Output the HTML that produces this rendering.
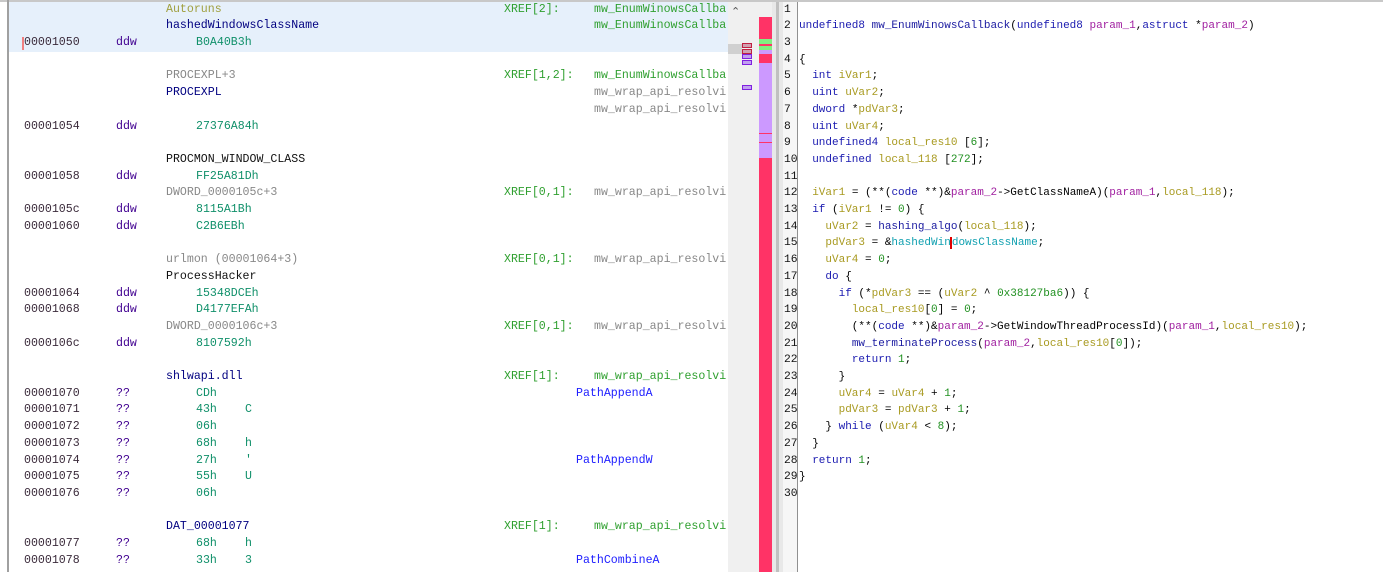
<!DOCTYPE html>
<html><head><meta charset="utf-8"><style>
body{margin:0;width:1383px;height:572px;overflow:hidden;background:#fff;position:relative;font-family:"Liberation Mono",monospace;}
.l{position:absolute;left:0;top:0;width:728px;height:572px;font-size:11.6px;}
.r{position:absolute;white-space:pre;line-height:16.7px;height:16.7px;}
.s{position:absolute;white-space:pre;}
.ad{color:#3a2a3a}.mn{color:#400090}.v{color:#10906a}.lb{color:#000080}.gr{color:#888}.ol{color:#a0a040}.xr{color:#30a030}.bl{color:#2020ff}.bk{color:#111}
.code{position:absolute;left:799px;top:1.6px;font-size:11px;line-height:16.7px;white-space:pre;color:#000;}
.ln{position:absolute;left:784px;top:1.6px;font-size:11.3px;line-height:16.7px;white-space:pre;color:#111;}
.t{color:#1a1ab0}.vr{color:#a89a20}.p{color:#a020a0}.n{color:#209020}.f{color:#1a1aa0}.g{color:#10a0b0}
</style></head><body>
<div style="position:absolute;left:0;top:0;width:1383px;height:2px;background:#c8c8c8"></div>
<div style="position:absolute;left:7px;top:0;width:2px;height:572px;background:#a0a0a0"></div>
<div style="position:absolute;left:9px;top:2px;width:719px;height:50px;background:#e6f0fb"></div>
<div style="position:absolute;left:22px;top:37px;width:2px;height:13px;background:#f08080"></div>
<div class="l">
<div class="r" style="top:1.6px"><span class="s ol" style="left:166px">Autoruns</span><span class="s xr" style="left:504px">XREF[2]:</span><span class="s xr" style="left:594px">mw_EnumWinowsCallba</span></div>
<div class="r" style="top:18.3px"><span class="s lb" style="left:166px">hashedWindowsClassName</span><span class="s xr" style="left:594px">mw_EnumWinowsCallba</span></div>
<div class="r" style="top:35px"><span class="s ad" style="left:24px">00001050</span><span class="s mn" style="left:116px">ddw</span><span class="s v" style="left:196px">B0A40B3h</span></div>
<div class="r" style="top:68.4px"><span class="s gr" style="left:166px">PROCEXPL+3</span><span class="s xr" style="left:504px">XREF[1,2]:</span><span class="s xr" style="left:594px">mw_EnumWinowsCallba</span></div>
<div class="r" style="top:85.1px"><span class="s lb" style="left:166px">PROCEXPL</span><span class="s gr" style="left:594px">mw_wrap_api_resolvi</span></div>
<div class="r" style="top:101.8px"><span class="s gr" style="left:594px">mw_wrap_api_resolvi</span></div>
<div class="r" style="top:118.5px"><span class="s ad" style="left:24px">00001054</span><span class="s mn" style="left:116px">ddw</span><span class="s v" style="left:196px">27376A84h</span></div>
<div class="r" style="top:151.9px"><span class="s bk" style="left:166px">PROCMON_WINDOW_CLASS</span></div>
<div class="r" style="top:168.6px"><span class="s ad" style="left:24px">00001058</span><span class="s mn" style="left:116px">ddw</span><span class="s v" style="left:196px">FF25A81Dh</span></div>
<div class="r" style="top:185.3px"><span class="s gr" style="left:166px">DWORD_0000105c+3</span><span class="s xr" style="left:504px">XREF[0,1]:</span><span class="s gr" style="left:594px">mw_wrap_api_resolvi</span></div>
<div class="r" style="top:202px"><span class="s ad" style="left:24px">0000105c</span><span class="s mn" style="left:116px">ddw</span><span class="s v" style="left:196px">8115A1Bh</span></div>
<div class="r" style="top:218.7px"><span class="s ad" style="left:24px">00001060</span><span class="s mn" style="left:116px">ddw</span><span class="s v" style="left:196px">C2B6EBh</span></div>
<div class="r" style="top:252.1px"><span class="s gr" style="left:166px">urlmon (00001064+3)</span><span class="s xr" style="left:504px">XREF[0,1]:</span><span class="s gr" style="left:594px">mw_wrap_api_resolvi</span></div>
<div class="r" style="top:268.8px"><span class="s bk" style="left:166px">ProcessHacker</span></div>
<div class="r" style="top:285.5px"><span class="s ad" style="left:24px">00001064</span><span class="s mn" style="left:116px">ddw</span><span class="s v" style="left:196px">15348DCEh</span></div>
<div class="r" style="top:302.2px"><span class="s ad" style="left:24px">00001068</span><span class="s mn" style="left:116px">ddw</span><span class="s v" style="left:196px">D4177EFAh</span></div>
<div class="r" style="top:318.9px"><span class="s gr" style="left:166px">DWORD_0000106c+3</span><span class="s xr" style="left:504px">XREF[0,1]:</span><span class="s gr" style="left:594px">mw_wrap_api_resolvi</span></div>
<div class="r" style="top:335.6px"><span class="s ad" style="left:24px">0000106c</span><span class="s mn" style="left:116px">ddw</span><span class="s v" style="left:196px">8107592h</span></div>
<div class="r" style="top:369px"><span class="s lb" style="left:166px">shlwapi.dll</span><span class="s xr" style="left:504px">XREF[1]:</span><span class="s xr" style="left:594px">mw_wrap_api_resolvi</span></div>
<div class="r" style="top:385.7px"><span class="s ad" style="left:24px">00001070</span><span class="s mn" style="left:116px">??</span><span class="s v" style="left:196px">CDh</span><span class="s bl" style="left:576px">PathAppendA</span></div>
<div class="r" style="top:402.4px"><span class="s ad" style="left:24px">00001071</span><span class="s mn" style="left:116px">??</span><span class="s v" style="left:196px">43h</span><span class="s v" style="left:245px">C</span></div>
<div class="r" style="top:419.1px"><span class="s ad" style="left:24px">00001072</span><span class="s mn" style="left:116px">??</span><span class="s v" style="left:196px">06h</span></div>
<div class="r" style="top:435.8px"><span class="s ad" style="left:24px">00001073</span><span class="s mn" style="left:116px">??</span><span class="s v" style="left:196px">68h</span><span class="s v" style="left:245px">h</span></div>
<div class="r" style="top:452.5px"><span class="s ad" style="left:24px">00001074</span><span class="s mn" style="left:116px">??</span><span class="s v" style="left:196px">27h</span><span class="s v" style="left:245px">'</span><span class="s bl" style="left:576px">PathAppendW</span></div>
<div class="r" style="top:469.2px"><span class="s ad" style="left:24px">00001075</span><span class="s mn" style="left:116px">??</span><span class="s v" style="left:196px">55h</span><span class="s v" style="left:245px">U</span></div>
<div class="r" style="top:485.9px"><span class="s ad" style="left:24px">00001076</span><span class="s mn" style="left:116px">??</span><span class="s v" style="left:196px">06h</span></div>
<div class="r" style="top:519.3px"><span class="s lb" style="left:166px">DAT_00001077</span><span class="s xr" style="left:504px">XREF[1]:</span><span class="s xr" style="left:594px">mw_wrap_api_resolvi</span></div>
<div class="r" style="top:536px"><span class="s ad" style="left:24px">00001077</span><span class="s mn" style="left:116px">??</span><span class="s v" style="left:196px">68h</span><span class="s v" style="left:245px">h</span></div>
<div class="r" style="top:552.7px"><span class="s ad" style="left:24px">00001078</span><span class="s mn" style="left:116px">??</span><span class="s v" style="left:196px">33h</span><span class="s v" style="left:245px">3</span><span class="s bl" style="left:576px">PathCombineA</span></div>
</div>
<!-- scrollbar area -->
<div style="position:absolute;left:728px;top:2px;width:31px;height:570px;background:#f0f0f0"></div>
<div style="position:absolute;left:731px;top:5px;font-size:11px;color:#555;font-family:'DejaVu Sans',sans-serif">&#8963;</div>
<div style="position:absolute;left:728px;top:44px;width:14px;height:10px;background:#d0d0d0"></div>
<div style="position:absolute;left:742px;top:43px;width:8px;height:3px;border:1px solid #c02040;background:#d0a0b0"></div>
<div style="position:absolute;left:742px;top:49px;width:8px;height:3px;border:1px solid #c02040;background:#d0a0b0"></div>
<div style="position:absolute;left:742px;top:54px;width:8px;height:3px;border:1px solid #8020e0;background:#c0a0f0"></div>
<div style="position:absolute;left:742px;top:60px;width:8px;height:3px;border:1px solid #8020e0;background:#c0a0f0"></div>
<div style="position:absolute;left:742px;top:85px;width:8px;height:3px;border:1px solid #8020e0;background:#c0a0f0"></div>
<div style="position:absolute;left:759px;top:2px;width:13px;height:570px;background:#ff3366"></div>
<div style="position:absolute;left:759px;top:2px;width:13px;height:15px;background:#f0f0f0"></div>
<div style="position:absolute;left:759px;top:39px;width:13px;height:5px;background:#80f080"></div>
<div style="position:absolute;left:759px;top:46px;width:13px;height:4px;background:#80f080"></div>
<div style="position:absolute;left:759px;top:50px;width:13px;height:4px;background:#cc99ff"></div>
<div style="position:absolute;left:759px;top:63px;width:13px;height:95px;background:#cc99ff"></div>
<div style="position:absolute;left:759px;top:133px;width:13px;height:1px;background:#ff3366"></div>
<div style="position:absolute;left:759px;top:142px;width:13px;height:1px;background:#ff3366"></div>
<div style="position:absolute;left:772px;top:2px;width:11px;height:570px;background:#e8e8e8"></div>
<div style="position:absolute;left:776px;top:2px;width:3px;height:570px;background:#c0c0c0"></div>
<div style="position:absolute;left:783px;top:2px;width:15px;height:570px;background:#f6f6f6"></div>
<div style="position:absolute;left:797px;top:2px;width:1px;height:570px;background:#909090"></div>
<div class="ln">1
2
3
4
5
6
7
8
9
10
11
12
13
14
15
16
17
18
19
20
21
22
23
24
25
26
27
28
29
30</div>
<div class="code">
<span class="t">undefined8</span> <span class="f">mw_EnumWinowsCallback</span>(<span class="t">undefined8</span> <span class="p">param_1</span>,<span class="t">astruct</span> *<span class="p">param_2</span>)

{
  <span class="t">int</span> <span class="vr">iVar1</span>;
  <span class="t">uint</span> <span class="vr">uVar2</span>;
  <span class="t">dword</span> *<span class="vr">pdVar3</span>;
  <span class="t">uint</span> <span class="vr">uVar4</span>;
  <span class="t">undefined4</span> <span class="vr">local_res10</span> [<span class="n">6</span>];
  <span class="t">undefined</span> <span class="vr">local_118</span> [<span class="n">272</span>];

  <span class="vr">iVar1</span> = (**(<span class="t">code</span> **)&amp;<span class="p">param_2</span>-&gt;GetClassNameA)(<span class="p">param_1</span>,<span class="vr">local_118</span>);
  <span class="t">if</span> (<span class="vr">iVar1</span> != <span class="n">0</span>) {
    <span class="vr">uVar2</span> = <span class="f">hashing_algo</span>(<span class="vr">local_118</span>);
    <span class="vr">pdVar3</span> = &amp;<span class="g">hashedWin<span style="border-left:2px solid #e00000;margin-left:-1px">d</span>owsClassName</span>;
    <span class="vr">uVar4</span> = <span class="n">0</span>;
    <span class="t">do</span> {
      <span class="t">if</span> (*<span class="vr">pdVar3</span> == (<span class="vr">uVar2</span> ^ <span class="n">0x38127ba6</span>)) {
        <span class="vr">local_res10</span>[<span class="n">0</span>] = <span class="n">0</span>;
        (**(<span class="t">code</span> **)&amp;<span class="p">param_2</span>-&gt;GetWindowThreadProcessId)(<span class="p">param_1</span>,<span class="vr">local_res10</span>);
        <span class="f">mw_terminateProcess</span>(<span class="p">param_2</span>,<span class="vr">local_res10</span>[<span class="n">0</span>]);
        <span class="t">return</span> <span class="n">1</span>;
      }
      <span class="vr">uVar4</span> = <span class="vr">uVar4</span> + <span class="n">1</span>;
      <span class="vr">pdVar3</span> = <span class="vr">pdVar3</span> + <span class="n">1</span>;
    } <span class="t">while</span> (<span class="vr">uVar4</span> &lt; <span class="n">8</span>);
  }
  <span class="t">return</span> <span class="n">1</span>;
}
</div>
</body></html>
